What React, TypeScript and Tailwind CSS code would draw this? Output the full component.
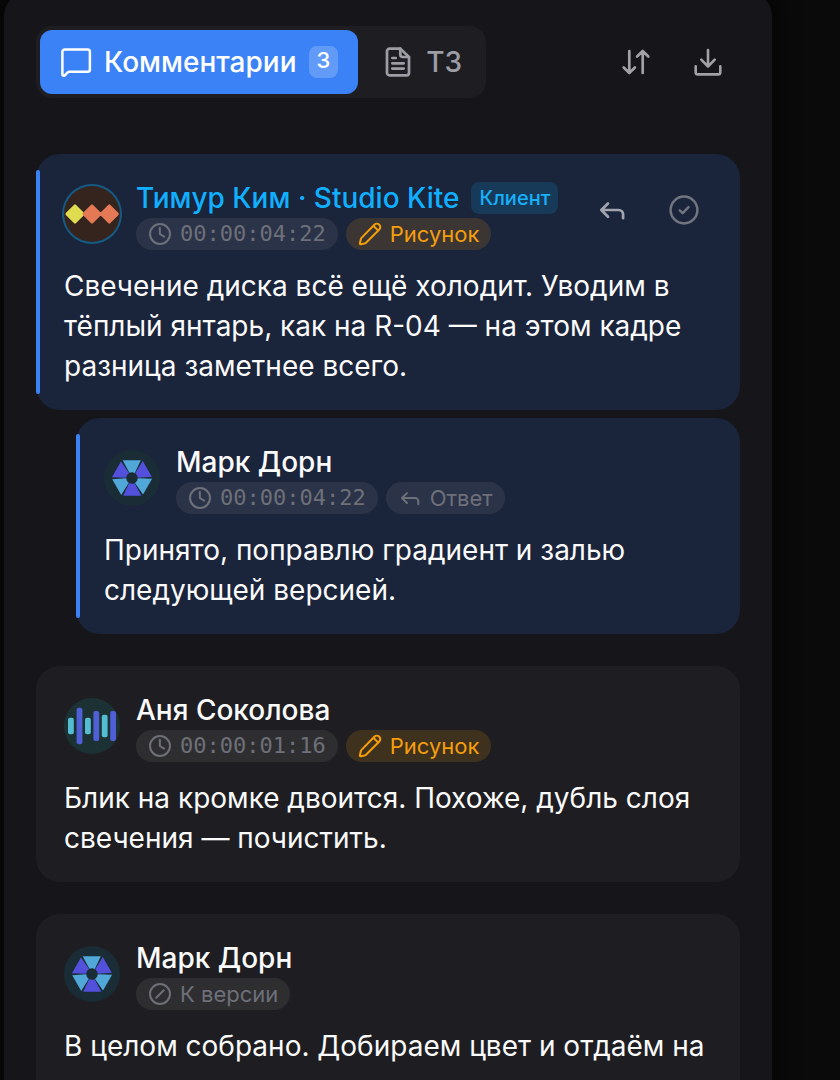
import type { ReactNode } from "react";

type IconProps = { className?: string };

function Icon({ className, width = 2.5, children }: { className?: string; width?: number; children: ReactNode }) {
  return (
    <svg
      viewBox="0 0 32 32"
      fill="none"
      stroke="currentColor"
      strokeWidth={width}
      strokeLinecap="round"
      strokeLinejoin="round"
      aria-hidden="true"
      className={className}
    >
      {children}
    </svg>
  );
}

const MessageIcon = ({ className }: IconProps) => (
  <Icon className={className}>
    <path d="M4.600 3.500h23a2.300 2.300 0 0 1 2.300 2.300v17.600a2.300 2.300 0 0 1-2.300 2.300H9.300a2.300 2.300 0 0 0-1.600.7l-2.900 3a1.400 1.400 0 0 1-2.400-1V5.800a2.300 2.300 0 0 1 2.300-2.300z" />
  </Icon>
);

const FileIcon = ({ className }: IconProps) => (
  <Icon className={className} width={2.7}>
    <path d="M18.300 2.600H7.600A2.600 2.600 0 0 0 5 5.200v21.600a2.600 2.600 0 0 0 2.600 2.600h16.800a2.600 2.600 0 0 0 2.600-2.600V11z" />
    <path d="M18.300 2.600V8.600A2.400 2.400 0 0 0 20.700 11H27M10.300 12h3.400M10.300 17.300h11.400M10.300 22.600h11.400" />
  </Icon>
);

const SortIcon = ({ className }: IconProps) => (
  <Icon className={className} width={2.7}>
    <path d="M9.300 5v22M3.700 21.500l5.600 5.500 5.600-5.500M22.700 27V5M17.100 10.500L22.700 5l5.600 5.500" />
  </Icon>
);

const DownloadIcon = ({ className }: IconProps) => (
  <Icon className={className} width={2.6}>
    <path d="M16 4v16.500M9.300 13.700l6.700 6.800 6.700-6.800M3.700 20.300v5.900a2.200 2.200 0 0 0 2.200 2.200h20.200a2.200 2.200 0 0 0 2.200-2.200v-5.900" />
  </Icon>
);

const ReplyIcon = ({ className }: IconProps) => (
  <Icon className={className} width={2.7}>
    <path d="M12 9.500L5.300 16l6.700 6.700M5.300 16h17.300a4.500 4.500 0 0 1 4.500 4.500v3.700" />
  </Icon>
);

const CheckCircleIcon = ({ className }: IconProps) => (
  <Icon className={className}>
    <circle cx="16" cy="16" r="13.400" />
    <path d="M11.800 16.300l2.900 2.900 5.800-6" />
  </Icon>
);

const ClockIcon = ({ className }: IconProps) => (
  <Icon className={className} width={2.7}>
    <circle cx="16" cy="16" r="13.300" />
    <path d="M15.800 7.600V16l5.700 3.400" />
  </Icon>
);

const PencilIcon = ({ className }: IconProps) => (
  <Icon className={className} width={2.7}>
    <path d="M21.800 3.600a4.600 4.600 0 0 1 6.600 6.500L11 27.300a5 5 0 0 1-2.300 1.300l-5 1a1 1 0 0 1-1.200-1.200l1.200-5.200a5 5 0 0 1 1.300-2.400zM20.500 5l6.500 6.500" />
  </Icon>
);

const SlashCircleIcon = ({ className }: IconProps) => (
  <Icon className={className} width={2.7}>
    <circle cx="16" cy="16" r="13.300" />
    <path d="M11 21L21 11" />
  </Icon>
);

function KiteAvatar() {
  return (
    <svg viewBox="0 0 56 56" role="img" aria-label="Тимур Ким" className="mt-1 size-14 shrink-0 rounded-full bg-[#35241e] ring-2 ring-[#155a82]">
      <g strokeLinejoin="round" strokeWidth="2.500">
        <path d="M11 19.700l8.300 8.300-8.300 8.300L2.700 28z" fill="#dfdc4f" stroke="#dfdc4f" />
        <path d="M28 19.700l8.300 8.300-8.300 8.300-8.300-8.300zM45.300 19.700l8.300 8.300-8.300 8.300-8.300-8.300z" fill="#e47955" stroke="#e47955" />
      </g>
    </svg>
  );
}

function PrismAvatar() {
  return (
    <svg viewBox="-28 -28 56 56" role="img" aria-label="Марк Дорн" className="mt-1 size-14 shrink-0 rounded-full bg-[#1a2c36]">
      {[0, 60, 120, 180, 240, 300].map((angle, i) => (
        <path
          key={angle}
          transform={`rotate(${angle})`}
          d="M-9.300-17.800H8.800L2.800-5.100A6 6 0 0 0-2.600-5.200z"
          fill={i % 2 ? "#5350dc" : "#51a8d8"}
        />
      ))}
    </svg>
  );
}

function WaveAvatar() {
  const bars = [
    [4, 19.7, 16.6],
    [12.6, 9.7, 36.6],
    [21, 19.7, 16.6],
    [29.4, 13, 30],
    [37.8, 16.7, 22.6],
    [46.2, 13, 30],
  ];
  return (
    <svg viewBox="0 0 56 56" role="img" aria-label="Аня Соколова" className="mt-1 size-14 shrink-0 rounded-full bg-[#1c3134]">
      {bars.map(([x, y, h], i) => (
        <rect key={x} x={x} y={y} width="5.800" height={h} rx="2" fill={i % 2 ? "#4f5fd6" : "#55bdd3"} />
      ))}
    </svg>
  );
}

function Tag({ icon, tone = "muted", mono, children }: { icon: ReactNode; tone?: "muted" | "amber"; mono?: boolean; children: ReactNode }) {
  const color = tone === "amber" ? "bg-[#f59e0b]/15 text-[#f59e0b]" : "bg-white/7 text-[#6e7079]";
  const font = mono ? "font-['DejaVu_Sans_Mono',monospace]" : "";
  return (
    <span className={`flex h-8 items-center gap-2 rounded-full px-3 text-[22px] leading-8 whitespace-nowrap ${color} ${font}`}>
      {icon}
      {children}
    </span>
  );
}

type CommentProps = {
  avatar: ReactNode;
  name: string;
  client?: boolean;
  highlighted?: boolean;
  tags: ReactNode;
  actions?: ReactNode;
  text: string;
};

function Comment({ avatar, name, client, highlighted, tags, actions, text }: CommentProps) {
  return (
    <article className={`relative rounded-3xl px-7 pt-7 pb-6 ${highlighted ? "bg-[#1a243a]" : "bg-[#1e1e22]"}`}>
      {highlighted && <span className="absolute inset-y-4 left-0 w-1 rounded-full bg-[#3b82f6]" />}
      <header className="flex items-start gap-4">
        {avatar}
        <div className="flex min-w-0 flex-1 flex-col gap-1">
          <div className="flex h-8 items-center gap-3">
            <h3 className={`text-[28px] leading-8 font-medium whitespace-nowrap ${client ? "text-[#10b0ff]" : "text-[#fafafa]"}`}>{name}</h3>
            {client && (
              <span className="flex h-8 items-center rounded-lg bg-[#163a58] px-2 text-[20px] font-medium text-[#18b0fa]">Клиент</span>
            )}
          </div>
          <div className="flex gap-2">{tags}</div>
        </div>
        {actions}
      </header>
      <p className="mt-4 min-h-20 text-[28px] leading-10 text-[#fafafa]">{text}</p>
    </article>
  );
}

const smallIcon = "size-6 shrink-0";
const drawingTag = (
  <Tag tone="amber" icon={<PencilIcon className={smallIcon} />}>
    Рисунок
  </Tag>
);
const timeTag = (time: string) => (
  <Tag mono icon={<ClockIcon className={smallIcon} />}>
    {time}
  </Tag>
);

const actionButton = "flex size-16 items-center justify-center rounded-xl";

export default function App() {
  return (
    <div className="h-screen overflow-hidden bg-[#0a0a0a] pr-[68px] pl-1 font-['Inter','Noto_Sans',sans-serif]">
      <main className="-mt-2 min-h-full rounded-t-3xl bg-[#16161a] px-8 pt-[34px] pb-8 shadow-[0_0_20px_8px_rgba(0,0,0,0.5)]">
        <div className="flex items-center justify-between">
          <div role="tablist" className="flex gap-1 rounded-2xl bg-[#1e1e22] p-1">
            <button
              role="tab"
              aria-selected="true"
              className="flex h-16 items-center gap-3 rounded-xl bg-[#3b82f6] px-5 text-[28px] font-medium text-white"
            >
              <MessageIcon className="size-8" />
              Комментарии
              <span className="flex h-8 items-center rounded-lg bg-white/20 px-2 pb-1 text-[22px]">3</span>
            </button>
            <button role="tab" aria-selected="false" className="flex h-16 items-center gap-3 px-5 text-[28px] font-medium text-[#9d9da6]">
              <FileIcon className="size-8" />
              ТЗ
            </button>
          </div>
          <div className="flex gap-2 text-[#a1a1a6]">
            <button aria-label="Сортировка" className={actionButton}>
              <SortIcon className="size-8" />
            </button>
            <button aria-label="Скачать" className={actionButton}>
              <DownloadIcon className="size-8" />
            </button>
          </div>
        </div>

        <div className="mt-14 flex flex-col gap-8">
          <section className="flex flex-col gap-2">
            <Comment
              highlighted
              client
              avatar={<KiteAvatar />}
              name="Тимур Ким · Studio Kite"
              tags={
                <>
                  {timeTag("00:00:04:22")}
                  {drawingTag}
                </>
              }
              actions={
                <div className="-mt-1 -mr-1 flex gap-2">
                  <button aria-label="Ответить" className={`${actionButton} text-[#a1a5b0]`}>
                    <ReplyIcon className="size-8" />
                  </button>
                  <button aria-label="Решено" className={`${actionButton} text-[#70757f]`}>
                    <CheckCircleIcon className="size-8" />
                  </button>
                </div>
              }
              text="Свечение диска всё ещё холодит. Уводим в тёплый янтарь, как на R-04 — на этом кадре разница заметнее всего."
            />
            <div className="pl-10">
              <Comment
                highlighted
                avatar={<PrismAvatar />}
                name="Марк Дорн"
                tags={
                  <>
                    {timeTag("00:00:04:22")}
                    <Tag icon={<ReplyIcon className={smallIcon} />}>Ответ</Tag>
                  </>
                }
                text="Принято, поправлю градиент и залью следующей версией."
              />
            </div>
          </section>
          <Comment
            avatar={<WaveAvatar />}
            name="Аня Соколова"
            tags={
              <>
                {timeTag("00:00:01:16")}
                {drawingTag}
              </>
            }
            text="Блик на кромке двоится. Похоже, дубль слоя свечения — почистить."
          />
          <Comment
            avatar={<PrismAvatar />}
            name="Марк Дорн"
            tags={<Tag icon={<SlashCircleIcon className={smallIcon} />}>К версии</Tag>}
            text="В целом собрано. Добираем цвет и отдаём на"
          />
        </div>
      </main>
    </div>
  );
}
